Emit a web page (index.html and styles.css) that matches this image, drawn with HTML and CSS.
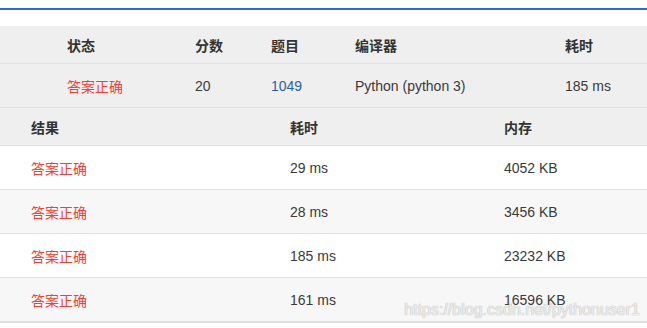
FILE: index.html
```html
<!DOCTYPE html>
<html lang="zh-CN">
<head>
<meta charset="utf-8">
<title>提交结果</title>
<link rel="stylesheet" href="styles.css">
</head>
<body>
<div class="page">
  <div class="topline"></div>
  <div class="summary">
    <div class="row head">
      <div>状态</div><div>分数</div><div>题目</div><div>编译器</div><div>耗时</div>
    </div>
    <div class="row data">
      <div class="ok">答案正确</div><div>20</div><div class="link">1049</div><div>Python (python 3)</div><div>185 ms</div>
    </div>
  </div>
  <div class="cases">
    <div class="crow head">
      <div>结果</div><div>耗时</div><div>内存</div>
    </div>
    <div class="crow">
      <div class="ok">答案正确</div><div>29 ms</div><div>4052 KB</div>
    </div>
    <div class="crow alt">
      <div class="ok">答案正确</div><div>28 ms</div><div>3456 KB</div>
    </div>
    <div class="crow">
      <div class="ok">答案正确</div><div>185 ms</div><div>23232 KB</div>
    </div>
    <div class="crow alt">
      <div class="ok">答案正确</div><div>161 ms</div><div>16596 KB</div>
    </div>
  </div>
  <div class="foot"></div>
  <div class="watermark">https://blog.csdn.net/pythonuser1</div>
</div>
</body>
</html>
```
FILE: styles.css
```css
html, body {
  margin: 0;
  padding: 0;
  background: #ffffff;
}
.page {
  position: relative;
  width: 647px;
  height: 328px;
  overflow: hidden;
  padding-top: 8px;
  box-sizing: border-box;
  font-family: "Liberation Sans", "Noto Sans CJK SC", sans-serif;
  font-size: 14px;
  color: #3a3a3a;
}
.topline {
  height: 2px;
  background: #3766c4;
  margin-bottom: 16px;
}
.summary {
  background: #efefef;
}
.row {
  display: grid;
  grid-template-columns: 128px 76px 84px 210px 1fr;
  padding-left: 67px;
  align-items: center;
  border-bottom: 1px solid #e2e2e2;
}
.row.head {
  height: 37px;
  font-weight: bold;
  color: #333333;
}
.row.data {
  height: 43px;
}
.crow {
  display: grid;
  grid-template-columns: 259px 214px 1fr;
  padding-left: 31px;
  align-items: center;
  height: 43px;
  border-bottom: 1px solid #e2e2e2;
  background: #ffffff;
}
.crow.head {
  height: 37px;
  background: #efefef;
  font-weight: bold;
  color: #333333;
}
.crow.alt {
  background: #f7f7f7;
}
.ok {
  color: #ff3b30;
}
.link {
  color: #2b5ea8;
}
.foot {
  height: 2px;
  background: #dedede;
  margin-top: -1px;
}
.watermark {
  position: absolute;
  right: 7px;
  bottom: 9px;
  font-family: "Liberation Sans", sans-serif;
  font-size: 16px;
  color: rgba(255, 255, 255, 0.75);
  text-shadow: 0 0 1px #b8b8b8, 0 0 1px #b8b8b8;
}
```
